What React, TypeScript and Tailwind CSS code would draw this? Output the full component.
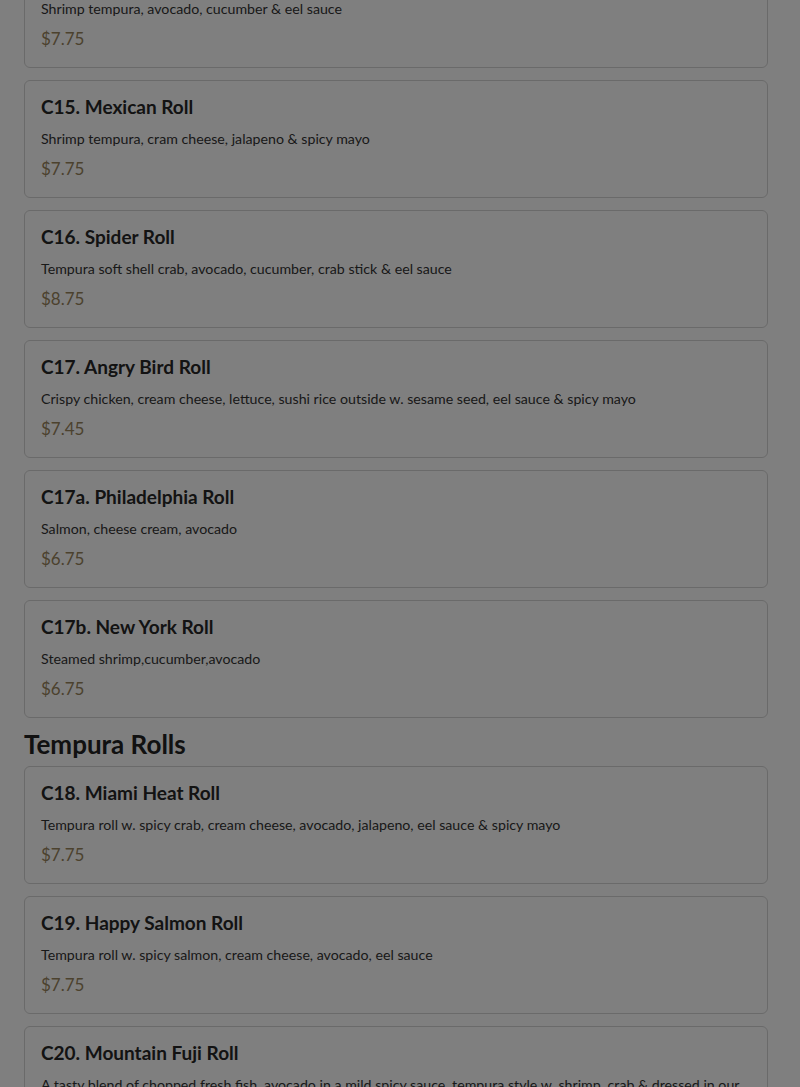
import React from "react";

type Item = { title: string; desc: string; price: string };

const group1: Item[] = [
  { title: "C14. Shrimp Tempura Roll", desc: "Shrimp tempura, avocado, cucumber & eel sauce", price: "$7.75" },
  { title: "C15. Mexican Roll", desc: "Shrimp tempura, cram cheese, jalapeno & spicy mayo", price: "$7.75" },
  { title: "C16. Spider Roll", desc: "Tempura soft shell crab, avocado, cucumber, crab stick & eel sauce", price: "$8.75" },
  { title: "C17. Angry Bird Roll", desc: "Crispy chicken, cream cheese, lettuce, sushi rice outside w. sesame seed, eel sauce & spicy mayo", price: "$7.45" },
  { title: "C17a. Philadelphia Roll", desc: "Salmon, cheese cream, avocado", price: "$6.75" },
  { title: "C17b. New York Roll", desc: "Steamed shrimp,cucumber,avocado", price: "$6.75" },
];

const group2: Item[] = [
  { title: "C18. Miami Heat Roll", desc: "Tempura roll w. spicy crab, cream cheese, avocado, jalapeno, eel sauce & spicy mayo", price: "$7.75" },
  { title: "C19. Happy Salmon Roll", desc: "Tempura roll w. spicy salmon, cream cheese, avocado, eel sauce", price: "$7.75" },
  { title: "C20. Mountain Fuji Roll", desc: "A tasty blend of chopped fresh fish, avocado in a mild spicy sauce, tempura style w. shrimp, crab & dressed in our special sauce", price: "$8.95" },
];

function Card({ item }: { item: Item }) {
  return (
    <div className="rounded-md border border-[#d4d4d4] bg-white px-4 pt-4 pb-4">
      <div className="text-[19px] leading-[20px] font-bold text-[#262626]">{item.title}</div>
      <div className="mt-3 text-[14.2px] leading-[20px] text-[#333]">{item.desc}</div>
      <div className="mt-2 text-[17px] leading-[24px] text-[#98845c]">{item.price}</div>
    </div>
  );
}

export default function App() {
  return (
    <div className="relative min-h-[1087px] bg-white overflow-hidden" style={{ fontFamily: "Lato, 'Open Sans', sans-serif" }}>
      <div className="ml-6 w-[744px] -mt-[50px] flex flex-col gap-3">
        {group1.map((it) => (
          <Card key={it.title} item={it} />
        ))}
        <h2 className="text-[26px] leading-[28px] font-bold text-[#222] -mb-1">Tempura Rolls</h2>
        {group2.map((it) => (
          <Card key={it.title} item={it} />
        ))}
      </div>
      <div className="fixed inset-0 bg-black/50" />
    </div>
  );
}
